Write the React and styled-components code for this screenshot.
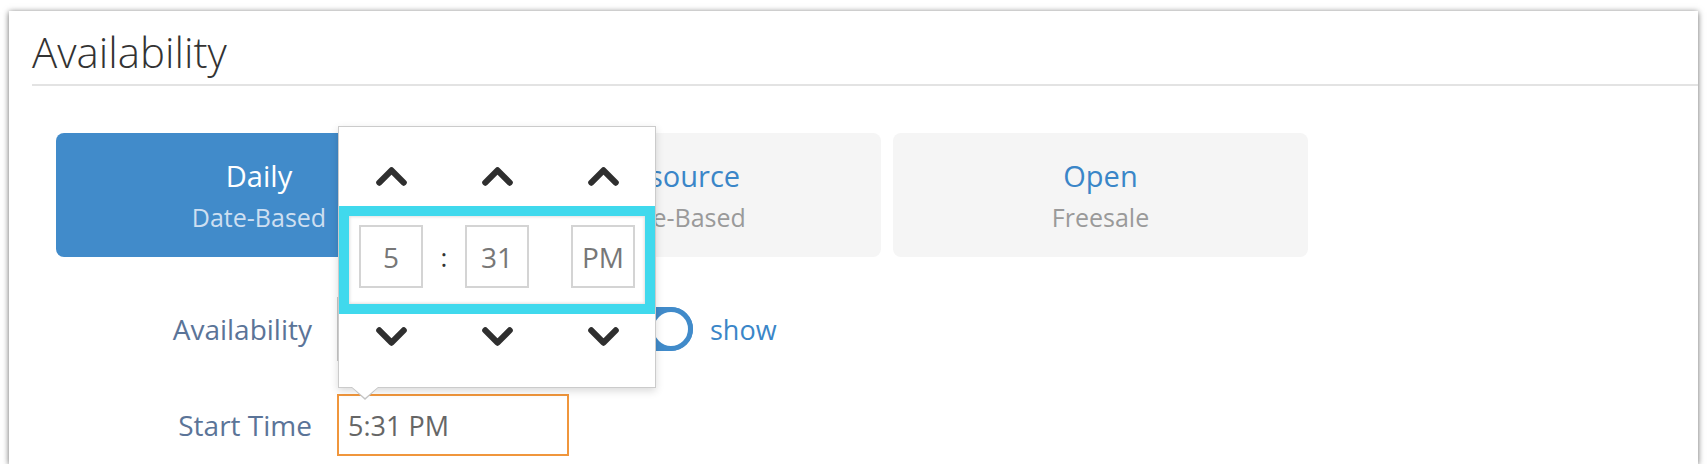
import React from "react";
import styled, { createGlobalStyle } from "styled-components";

const GlobalStyle = createGlobalStyle`
  body {
    margin: 0;
    background: #ffffff;
    font-family: "Open Sans", "Liberation Sans", sans-serif;
  }
`;

const cards = [
  { title: "Daily", sub: "Date-Based", width: 406, active: true },
  { title: "Resource", sub: "Time-Based", width: 407 },
  { title: "Open", sub: "Freesale", width: 415 },
];

function Chevron({ down }) {
  return (
    <svg width="31" height="19" viewBox="0 0 31 19">
      <path
        d={down ? "M3.3 3.4 L15.5 15.6 L27.7 3.4" : "M3.3 15.6 L15.5 3.4 L27.7 15.6"}
        fill="none"
        stroke="#2f2f2f"
        strokeWidth="6.2"
        strokeLinecap="round"
        strokeLinejoin="round"
      />
    </svg>
  );
}

function TimePicker() {
  return (
    <Popup>
      <PickerGrid $pad="40px 0 0" $height={79}>
        <Chevron />
        <span />
        <Chevron />
        <span />
        <Chevron />
      </PickerGrid>
      <HighlightRow>
        <DigitBox>5</DigitBox>
        <Colon>:</Colon>
        <DigitBox>31</DigitBox>
        <span />
        <DigitBox>PM</DigitBox>
      </HighlightRow>
      <PickerGrid $pad="13px 0 0" $height={73}>
        <Chevron down />
        <span />
        <Chevron down />
        <span />
        <Chevron down />
      </PickerGrid>
    </Popup>
  );
}

export default function App() {
  return (
    <>
      <GlobalStyle />
      <Panel>
        <Header>
          <Title>Availability</Title>
        </Header>
        <Body>
          <CardRow>
            {cards.map((c) => (
              <Card key={c.title} $width={c.width} $active={c.active}>
                <CardTitle $active={c.active}>{c.title}</CardTitle>
                <CardSub $active={c.active}>{c.sub}</CardSub>
              </Card>
            ))}
          </CardRow>
          <Form>
            <Label>Availability</Label>
            <FieldGroup>
              <AvailBox />
              <Toggle>
                <Knob />
              </Toggle>
              <ToggleText>show</ToggleText>
            </FieldGroup>
            <Label>Start Time</Label>
            <TimeField>
              5:31 PM
              <TimePicker />
            </TimeField>
          </Form>
        </Body>
      </Panel>
    </>
  );
}

const Panel = styled.div`
  margin: 11px 0 0 9px;
  width: 1689px;
  box-sizing: border-box;
  padding-bottom: 8px;
  background: #fff;
  box-shadow: 0 1px 6px rgba(0, 0, 0, 0.6);
`;

const Header = styled.div`
  margin-left: 23px;
  padding: 16px 0 7px;
  border-bottom: 2px solid #e3e3e3;
`;

const Title = styled.h1`
  margin: 0;
  font-size: 42px;
  font-weight: 300;
  line-height: 50px;
  color: #333;
`;

const Body = styled.div`
  padding: 47px 0 0 47px;
`;

const CardRow = styled.div`
  display: flex;
  gap: 12px;
`;

const Card = styled.div`
  width: ${(p) => p.$width}px;
  height: 124px;
  box-sizing: border-box;
  padding-top: 25px;
  border-radius: 8px;
  text-align: center;
  background: ${(p) => (p.$active ? "#418bca" : "#f5f5f5")};
`;

const CardTitle = styled.div`
  font-size: 29px;
  line-height: 36px;
  color: ${(p) => (p.$active ? "#ffffff" : "#3a86c8")};
`;

const CardSub = styled.div`
  margin-top: 6px;
  font-size: 25px;
  line-height: 34px;
  color: ${(p) => (p.$active ? "#cddff1" : "#9a9a9a")};
`;

const Form = styled.div`
  margin-top: 40px;
  display: grid;
  grid-template-columns: 256px 1fr;
  column-gap: 25px;
  row-gap: 33px;
  align-items: center;
`;

const Label = styled.div`
  text-align: right;
  font-size: 28px;
  color: #5b7498;
`;

const FieldGroup = styled.div`
  display: flex;
  align-items: center;
`;

const AvailBox = styled.div`
  width: 260px;
  height: 64px;
  box-sizing: border-box;
  border: 2px solid #c9c9c9;
`;

const Toggle = styled.div`
  margin-left: 20px;
  width: 76px;
  height: 44px;
  border-radius: 22px;
  background: #418bca;
  display: flex;
  justify-content: flex-end;
`;

const Knob = styled.div`
  width: 44px;
  height: 44px;
  box-sizing: border-box;
  border-radius: 50%;
  border: 5px solid #418bca;
  background: #fff;
`;

const ToggleText = styled.span`
  margin-left: 17px;
  font-size: 27px;
  color: #3a86c8;
`;

const TimeField = styled.div`
  position: relative;
  width: 232px;
  height: 62px;
  box-sizing: border-box;
  border: 2px solid #f0963c;
  padding-left: 9px;
  display: flex;
  align-items: center;
  font-size: 27px;
  color: #666;
`;

const Popup = styled.div`
  position: absolute;
  left: -1px;
  bottom: calc(100% + 8px);
  z-index: 5;
  width: 318px;
  box-sizing: border-box;
  border: 1px solid #cbcbcb;
  background: #fff;
  box-shadow: 0 3px 8px rgba(0, 0, 0, 0.15);

  &::before,
  &::after {
    content: "";
    position: absolute;
    left: 12px;
    top: 100%;
    border-left: 14px solid transparent;
    border-right: 14px solid transparent;
    border-top: 13px solid #c4c4c4;
  }

  &::after {
    left: 13px;
    border-left-width: 13px;
    border-right-width: 13px;
    border-top: 11px solid #fff;
  }
`;

const PickerGrid = styled.div`
  display: grid;
  grid-template-columns: 104px 2px 104px 2px 104px;
  justify-items: center;
  align-items: start;
  box-sizing: border-box;
  padding: ${(p) => p.$pad};
  height: ${(p) => p.$height}px;
`;

const HighlightRow = styled(PickerGrid)`
  align-items: center;
  height: 108px;
  padding: 19px 0 26px;
  box-shadow: inset 0 0 0 10px #40d9ed, inset 0 0 3px 11px rgba(0, 0, 0, 0.12);
`;

const DigitBox = styled.div`
  width: 64px;
  height: 63px;
  box-sizing: border-box;
  border: 2px solid #d4d4d4;
  display: flex;
  align-items: center;
  justify-content: center;
  font-size: 28px;
  color: #777;
`;

const Colon = styled.div`
  width: 2px;
  display: flex;
  justify-content: center;
  font-size: 26px;
  color: #333;
`;
